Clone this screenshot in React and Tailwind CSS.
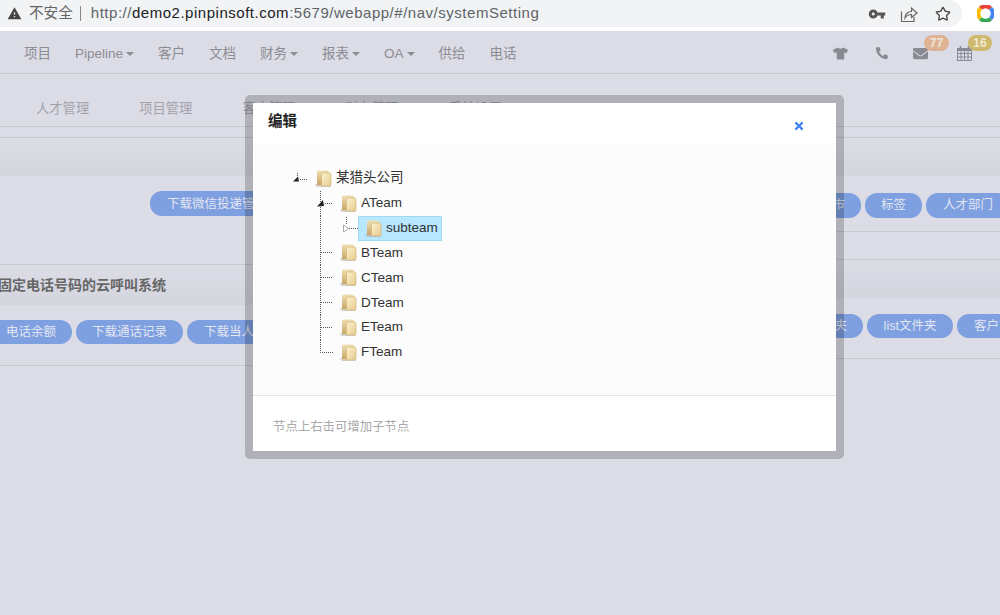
import React from "react";
import { MdVpnKey, MdWarning } from "react-icons/md";
import { FaTshirt, FaPhone, FaEnvelope, FaTimes } from "react-icons/fa";
import { Star } from "lucide-react";

const menu = [
  { nome: "项目" },
  { nome: "Pipeline", caret: true },
  { nome: "客户" },
  { nome: "文档" },
  { nome: "财务", caret: true },
  { nome: "报表", caret: true },
  { nome: "OA", caret: true },
  { nome: "供给" },
  { nome: "电话" },
];

function Botao({ children, className = "" }) {
  return (
    <div className={"shrink-0 rounded-[12px] bg-[#7e9fe0] pt-px text-[12.5px] text-[#e2e6f2] whitespace-nowrap " + className}>
      {children}
    </div>
  );
}

function Pasta() {
  return (
    <svg width="17" height="17" viewBox="0 0 17 17" className="shrink-0">
      <defs>
        <linearGradient id="pastaA" x1="0" y1="0" x2="0" y2="1">
          <stop offset="0" stopColor="#efe0b4" />
          <stop offset="1" stopColor="#c9a566" />
        </linearGradient>
        <linearGradient id="pastaB" x1="0" y1="0" x2="1" y2="1">
          <stop offset="0" stopColor="#fdf3d0" />
          <stop offset="1" stopColor="#e6c98c" />
        </linearGradient>
      </defs>
      <path d="M0 15 L3 13 L15 15 L16 17 L2 17 Z" fill="#a9a296" opacity="0.5" />
      <path d="M2 2 Q2 0.5 3.5 0.5 L12.5 0.5 Q14 0.5 14 2 L14 4 L9 15 L2 15 Z" fill="url(#pastaA)" />
      <path d="M6.5 4 Q6.5 3 7.5 3 L14.5 3 Q16 3 16 4.5 L16 14.5 Q16 16 14.5 16 L6.5 16 Z" fill="url(#pastaB)" stroke="#cfae70" strokeWidth="0.6" />
    </svg>
  );
}

// conectores da arvore: cada tipo ocupa a altura inteira da linha
function Conector({ tipo }) {
  const ponto = { stroke: "#555", strokeWidth: 1, strokeDasharray: "1 1", fill: "none" };
  return (
    <svg width="16" height="25" viewBox="0 0 16 25" className="shrink-0">
      {tipo === "raiz" && (
        <>
          <path d="M5.5 7 V11" {...ponto} />
          <path d="M1 15.5 L6 10.5 L7 15.5 Z" fill="#222" />
          <path d="M8 13.5 H17" {...ponto} />
        </>
      )}
      {tipo === "aberto" && (
        <>
          <path d="M3.5 0 V25" {...ponto} />
          <path d="M0 15.5 L6 9 L7 15 Z" fill="#222" />
          <path d="M8 12.5 H17" {...ponto} />
        </>
      )}
      {tipo === "meio" && (
        <>
          <path d="M3.5 0 V25" {...ponto} />
          <path d="M4 12.5 H17" {...ponto} />
        </>
      )}
      {tipo === "fim" && <path d="M3.5 0 V12.5 H17" {...ponto} />}
      {tipo === "linha" && <path d="M3.5 0 V25" {...ponto} />}
      {tipo === "fechado" && (
        <>
          <path d="M4.5 1 V9" {...ponto} />
          <path d="M1.5 9 L6.5 12.5 L1.5 16 Z" fill="#fff" stroke="#aaa" />
          <path d="M7 12.5 H16" {...ponto} />
        </>
      )}
    </svg>
  );
}

function Linha({ tipo, nome }) {
  return (
    <div className="flex h-[24.85px] items-center">
      <Conector tipo={tipo} />
      <div className="ml-[7px] flex items-center">
        <Pasta />
        <span className="ml-[4px] text-[13.5px] text-[#333]">{nome}</span>
      </div>
    </div>
  );
}

function Modal() {
  return (
    <div className="absolute left-[245px] top-[95px] h-[364px] w-[599px] rounded-[5px] border-[8px] border-[rgba(0,0,0,0.2)] bg-white bg-clip-padding">
      <div className="flex h-[40px] items-start justify-between bg-white pl-[15px] pr-[31px]">
        <span className="mt-[8px] text-[14.5px] font-bold leading-[20px] text-[#222]">编辑</span>
        <FaTimes className="mt-[17px] text-[#3b82f6]" size={12} />
      </div>
      <div className="h-[253px] border-b border-[#e5e5e5] bg-[#fcfcfc] pl-[39px] pt-[23px]">
        <Linha tipo="raiz" nome="某猎头公司" />
        <div className="pl-[25px]">
          <Linha tipo="aberto" nome="ATeam" />
          <div className="flex h-[24.85px] items-center">
            <Conector tipo="linha" />
            <div className="ml-[9px] flex items-center">
              <Conector tipo="fechado" />
              <div className="flex h-[25px] w-[84px] items-center border border-[#9fd9f2] bg-[#b8e8ff] pl-[6px]">
                <Pasta />
                <span className="ml-[4px] text-[13.5px] text-[#333]">subteam</span>
              </div>
            </div>
          </div>
          <Linha tipo="meio" nome="BTeam" />
          <Linha tipo="meio" nome="CTeam" />
          <Linha tipo="meio" nome="DTeam" />
          <Linha tipo="meio" nome="ETeam" />
          <Linha tipo="fim" nome="FTeam" />
        </div>
      </div>
      <div className="pl-[20px] pt-[22px] text-[12.4px] leading-[18px] text-[#aaa]">节点上右击可增加子节点</div>
    </div>
  );
}

export default function App() {
  return (
    <div
      className="relative h-[615px] w-full overflow-hidden bg-[#dcdce6]"
      style={{ fontFamily: '"Liberation Sans", "Noto Sans CJK SC", sans-serif' }}
    >
      {/* barra do navegador */}
      <div className="flex h-[31px] items-start bg-white">
        <div className="flex h-[27px] w-[962px] items-center rounded-r-[14px] bg-[#f1f3f4] pl-[7px] pr-[11px]">
          <MdWarning size={15} className="text-[#444]" />
          <span className="ml-[7px] text-[14.6px] text-[#666]">不安全</span>
          <div className="ml-[7px] h-[15px] w-px bg-[#888]" />
          <div className="ml-[10px] text-[15px] tracking-[0.52px] text-[#5f6368]">
            http://<span className="text-[#202124]">demo2.pinpinsoft.com</span>:5679/webapp/#/nav/systemSetting
          </div>
          <div className="ml-auto flex items-center">
            <MdVpnKey size={18} className="text-[#555]" />
            <svg width="18" height="18" viewBox="0 0 18 18" fill="none" stroke="#666" strokeWidth="1.2" className="ml-[14px]">
              <path d="M1.5 6.5 V16.5 H14 V12" />
              <path d="M5 13 C5 9 8 6.5 11.5 6.5 V3 L17 8 L11.5 12.5 V9.5 C8.5 9.5 6.5 10.5 5 13 Z" />
            </svg>
            <Star size={16} className="ml-[17px] text-[#444]" strokeWidth={2} />
          </div>
        </div>
        <svg width="17" height="17" viewBox="0 0 17 17" className="ml-[15px] mt-[5px] shrink-0" fill="none" strokeWidth="4">
          <path d="M3.4 3.4 A7 7 0 0 1 13.6 3.4" stroke="#ea4335" />
          <path d="M13.6 3.4 A7 7 0 0 1 13.6 13.6" stroke="#4285f4" />
          <path d="M13.6 13.6 A7 7 0 0 1 3.4 13.6" stroke="#34a853" />
          <path d="M3.4 13.6 A7 7 0 0 1 3.4 3.4" stroke="#fbbc05" />
        </svg>
      </div>

      {/* menu principal */}
      <div className="flex h-[43px] items-center gap-[24px] border-b border-[#c9c9d2] pl-[24px] pr-[28px] pt-[4px] text-[13.5px] text-[#8c8c94]">
        {menu.map((item) => (
          <div key={item.nome} className="flex items-center">
            {item.nome}
            {item.caret && <span className="ml-[3px] h-0 w-0 border-x-[4px] border-t-[4px] border-x-transparent border-t-[#8c8c94]" />}
          </div>
        ))}
        <div className="ml-auto -mt-[2px] flex items-center text-[#8a8a94]">
          <FaTshirt size={15} />
          <FaPhone size={12} className="ml-[28px] -scale-x-100" />
          <div className="relative ml-[25px]">
            <FaEnvelope size={15} />
            <span className="absolute left-[11px] top-[-11px] h-[16px] w-[25px] rounded-full bg-[#dfb294] text-center text-[12px] font-bold leading-[16px] text-[#efe6e0]">77</span>
          </div>
          <div className="relative ml-[29px]">
            <svg width="15" height="15" viewBox="0 0 15 15" fill="none" stroke="currentColor" className="block">
              <rect x="0.5" y="2.5" width="14" height="12" />
              <path d="M0.5 3.5 H14.5 M0.5 4.5 H14.5 M0.5 7.5 H14.5 M0.5 11 H14.5 M4 5 V14 M7.5 5 V14 M11 5 V14" />
              <path d="M3.5 0 V3 M11.5 0 V3" strokeWidth="1.6" />
            </svg>
            <span className="absolute left-[11px] top-[-11px] h-[16px] w-[24px] rounded-full bg-[#cfb96c] text-center text-[12px] font-bold leading-[16px] text-[#eee8d4]">16</span>
          </div>
        </div>
      </div>

      {/* abas */}
      <div className="flex h-[53px] items-center gap-[50px] border-b border-[#c9c9d2] pl-[36px] pt-[18px] text-[13.3px] text-[#a3a3ac]">
        <span>人才管理</span>
        <span>项目管理</span>
        <span>客户管理</span>
        <span>财务管理</span>
        <span>系统设置</span>
      </div>

      <div className="mt-[10px] h-[40px] border-y border-t-[#c9c9d2] border-b-transparent bg-gradient-to-b from-[#dcdce6] to-[#d5d5df]" />

      <div className="grid grid-cols-2">
        {/* coluna esquerda */}
        <div className="overflow-hidden">
          <div className="flex h-[88px] items-start border-b border-[#c9c9d2] pl-[150px] pt-[14px]">
            <Botao className="h-[25px] w-[400px] pl-[17px] leading-[25px]">下载微信投递管理</Botao>
          </div>
          <div className="h-[40px] bg-gradient-to-b from-[#dcdce6] to-[#d5d5df] pl-0 text-[14px] font-bold leading-[40px] text-[#666]">
            <span className="-ml-[2px]">固定电话号码的云呼叫系统</span>
          </div>
          <div className="flex h-[61px] items-start gap-[4px] border-b border-[#c9c9d2] pt-[15px]">
            <Botao className="-ml-[20px] h-[24px] w-[92px] pl-[26px] leading-[22px]">电话余额</Botao>
            <Botao className="h-[24px] w-[107px] text-center leading-[22px]">下载通话记录</Botao>
            <Botao className="h-[24px] w-[300px] pl-[17px] leading-[22px]">下载当人员</Botao>
          </div>
        </div>

        {/* coluna direita */}
        <div className="overflow-hidden">
          <div className="flex h-[55px] items-start gap-[4px] border-b border-[#c9c9d2] pt-[16px]">
            <Botao className="h-[25px] w-[361px] pr-[16px] text-right leading-[23px]">城市</Botao>
            <Botao className="h-[25px] w-[57px] text-center leading-[23px]">标签</Botao>
            <Botao className="h-[25px] w-[84px] pl-[17px] leading-[23px]">人才部门</Botao>
          </div>
          <div className="h-[27px]" />
          <div className="h-[39px] border-t border-[#c9c9d2] bg-gradient-to-b from-[#dcdce6] to-[#d5d5df]" />
          <div className="flex h-[61px] items-start gap-[4px] border-b border-[#c9c9d2] pt-[16px]">
            <Botao className="h-[24px] w-[363px] pr-[16px] text-right leading-[22px]">文件夹</Botao>
            <Botao className="h-[24px] w-[86px] text-center leading-[22px]">list文件夹</Botao>
            <Botao className="h-[24px] w-[80px] pl-[17px] leading-[22px]">客户文件夹</Botao>
          </div>
        </div>
      </div>

      <Modal />
    </div>
  );
}
